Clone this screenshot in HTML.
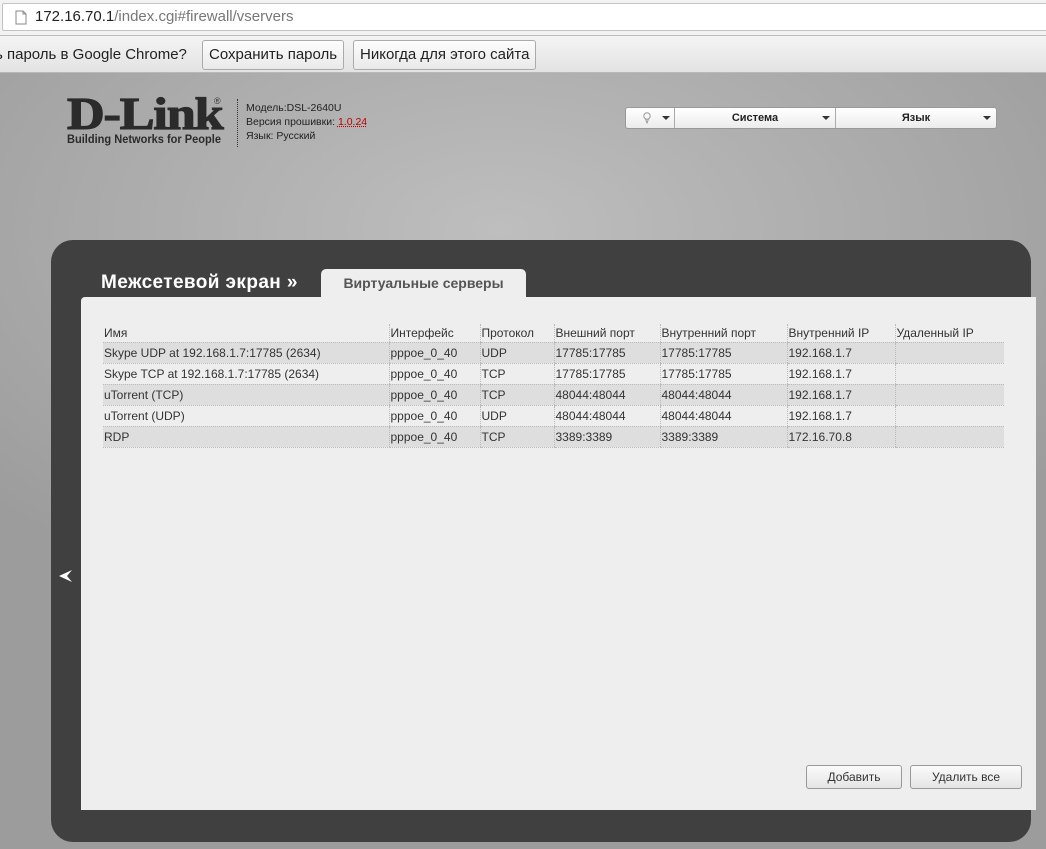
<!DOCTYPE html>
<html><head><meta charset="utf-8"><style>
*{margin:0;padding:0;box-sizing:border-box}
body{width:1046px;height:849px;overflow:hidden;font-family:"Liberation Sans",sans-serif;position:relative;background:radial-gradient(ellipse 700px 400px at 500px 230px,#bebebe,#a3a3a3 80%,#9c9c9c)}
.addr{position:absolute;left:0;top:0;width:1046px;height:36px;background:#f2f2f2;border-bottom:1px solid #bcbcbc}
.addr .box{position:absolute;left:2px;top:3px;width:1050px;height:28px;background:#fff;border:1px solid #c4c4c4;border-radius:2px}
.addr .t{position:absolute;left:35px;top:8px;font-size:15px;color:#222}
.addr .t span{color:#777}
.info{position:absolute;left:0;top:36px;width:1046px;height:37px;background:linear-gradient(#f4f4f4,#e3e3e3);border-bottom:1px solid #b8b8b8;font-size:15px;color:#222}
.btn{position:absolute;top:4px;height:30px;border:1px solid #aaa;border-radius:3px;background:linear-gradient(#fdfdfd,#e9e9e9);padding:5px 6px;white-space:nowrap}
.logo{position:absolute;left:67px;top:92px;font-family:"Liberation Serif",serif;font-weight:bold;font-size:45px;color:#2b2b2b;letter-spacing:-1px;line-height:44px;transform:scaleX(1.16);transform-origin:left;-webkit-text-stroke:1.2px #2b2b2b}
.tag{position:absolute;left:67px;top:132px;font-size:12px;font-weight:bold;color:#2b2b2b;transform:scaleX(.92);transform-origin:left}
.sep{position:absolute;left:237px;top:99px;height:48px;border-left:1px dotted #333}
.meta{position:absolute;left:246px;top:101px;font-size:10.5px;color:#222;line-height:14px}
.meta u{color:#b00;text-decoration:underline dotted}
.menu{position:absolute;left:625px;top:107px;width:372px;height:22px;background:linear-gradient(#fff,#ececec);border:1px solid #999;border-radius:3px;font-size:11px;font-weight:bold;color:#222}
.menu div{position:absolute;top:0;height:20px;line-height:20px;text-align:center;border-right:1px solid #aaa}
.arr{position:absolute;top:8px;width:0;height:0;border-left:4px solid transparent;border-right:4px solid transparent;border-top:4px solid #333}
.dark{position:absolute;left:51px;top:240px;width:980px;height:602px;background:#404040;border-radius:22px}
.title{position:absolute;left:101px;top:272px;font-size:19px;font-weight:bold;color:#fff;letter-spacing:.4px}
.tab{position:absolute;left:321px;top:269px;width:205px;height:30px;background:#eee;border-radius:5px 5px 0 0;font-size:14px;font-weight:bold;color:#555;text-align:center;padding-top:6px}
.light{position:absolute;left:81px;top:297px;width:955px;height:513px;background:#eee;border-radius:4px 0 0 0}
table{position:absolute;left:103px;top:324px;width:901px;border-collapse:collapse;font-size:12px;color:#333}
td{height:21px;padding:0 0 0 1px;border-left:1px dotted #bbb;border-bottom:1px dotted #bbb;white-space:nowrap}
td:first-child{border-left:none}
tr.h td{height:18px;border-bottom:1px dotted #bbb}
tr.a td{background:#dedede}
.b2{position:absolute;top:765px;height:24px;border:1px solid #999;border-radius:3px;background:linear-gradient(#fbfbfb,#e4e4e4);font-size:12px;color:#333;text-align:center;line-height:22px}
</style></head><body>
<div class="addr"><div class="box"></div>
<svg style="position:absolute;left:15px;top:10px" width="12" height="15"><path d="M1 1h7l3 3v10H1z" fill="#fff" stroke="#888"/><path d="M8 1v3h3" fill="none" stroke="#888"/></svg>
<div class="t">172.16.70.1<span>/index.cgi#firewall/vservers</span></div></div>
<div class="info"><div style="position:absolute;left:-5px;top:10px">ь пароль в Google Chrome?</div>
<div class="btn" style="left:202px">Сохранить пароль</div>
<div class="btn" style="left:353px">Никогда для этого сайта</div></div>
<div class="logo">D-Link</div><div style="position:absolute;left:214px;top:96px;font-size:9px;color:#333">®</div>
<div class="tag">Building Networks for People</div>
<div class="sep"></div>
<div class="meta">Модель:DSL-2640U<br>Версия прошивки: <u>1.0.24</u><br>Язык: Русский</div>
<div class="menu">
<div style="left:0;width:49px"><svg style="position:absolute;left:17px;top:4px" width="8" height="12"><circle cx="4" cy="4" r="3.2" fill="none" stroke="#999"/><path d="M2.5 7L4 11L5.5 7" fill="none" stroke="#999"/></svg><i class="arr" style="left:36px"></i></div>
<div style="left:49px;width:161px">Система<i class="arr" style="left:147px"></i></div>
<div style="left:210px;width:160px;border-right:none">Язык<i class="arr" style="left:147px"></i></div>
</div>
<div class="dark"></div>
<svg style="position:absolute;left:59px;top:569px" width="14" height="14"><path d="M0 7L13 1L8 7L13 13Z" fill="#fff"/></svg>
<div class="title">Межсетевой экран »</div>
<div class="light"></div>
<div class="tab">Виртуальные серверы</div>
<table>
<colgroup><col style="width:286px"><col style="width:91px"><col style="width:74px"><col style="width:106px"><col style="width:127px"><col style="width:108px"><col></colgroup>
<tr class="h"><td>Имя</td><td>Интерфейс</td><td>Протокол</td><td>Внешний порт</td><td>Внутренний порт</td><td>Внутренний IP</td><td>Удаленный IP</td></tr>
<tr class="a"><td>Skype UDP at 192.168.1.7:17785 (2634)</td><td>pppoe_0_40</td><td>UDP</td><td>17785:17785</td><td>17785:17785</td><td>192.168.1.7</td><td></td></tr>
<tr><td>Skype TCP at 192.168.1.7:17785 (2634)</td><td>pppoe_0_40</td><td>TCP</td><td>17785:17785</td><td>17785:17785</td><td>192.168.1.7</td><td></td></tr>
<tr class="a"><td>uTorrent (TCP)</td><td>pppoe_0_40</td><td>TCP</td><td>48044:48044</td><td>48044:48044</td><td>192.168.1.7</td><td></td></tr>
<tr><td>uTorrent (UDP)</td><td>pppoe_0_40</td><td>UDP</td><td>48044:48044</td><td>48044:48044</td><td>192.168.1.7</td><td></td></tr>
<tr class="a"><td>RDP</td><td>pppoe_0_40</td><td>TCP</td><td>3389:3389</td><td>3389:3389</td><td>172.16.70.8</td><td></td></tr>
</table>
<div class="b2" style="left:806px;width:96px">Добавить</div>
<div class="b2" style="left:910px;width:112px">Удалить все</div>
</body></html>
